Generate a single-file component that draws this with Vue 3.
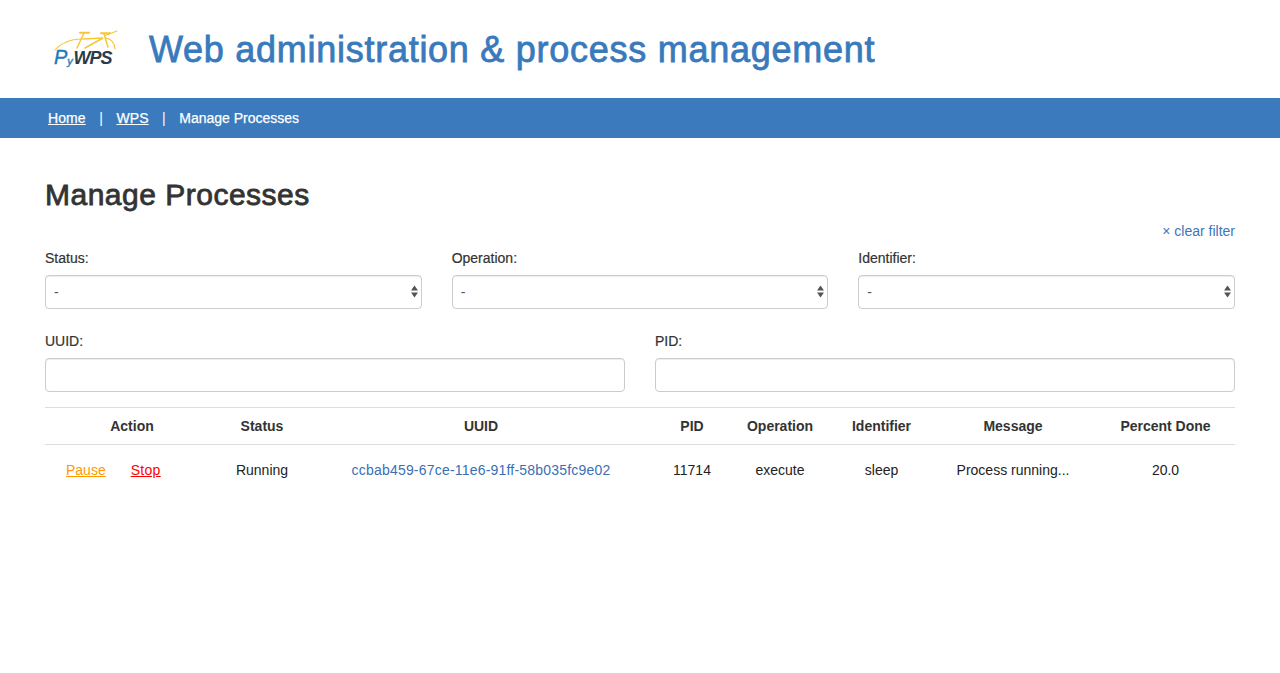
<script setup>
const topFilters = ['Status:', 'Operation:', 'Identifier:']
const bottomFilters = ['UUID:', 'PID:']
const columns = [
  { name: 'Action', width: 174 },
  { name: 'Status', width: 86 },
  { name: 'UUID', width: 352 },
  { name: 'PID', width: 70 },
  { name: 'Operation', width: 106 },
  { name: 'Identifier', width: 97 },
  { name: 'Message', width: 166 },
  { name: 'Percent Done', width: 139 },
]
</script>

<template>
  <div class="page">
    <header class="masthead">
      <svg class="logo" width="74" height="42" viewBox="0 0 74 42" role="img" aria-label="PyWPS">
        <g fill="none" stroke="#f8c537" stroke-linecap="round">
          <path d="M9 22C14 16 24 11 36 11" stroke-width="1.1" />
          <path d="M59 7.5C63 6 67 4.5 71 3" stroke-width="1.1" />
          <path d="M60 10C65 11 69 15 69 21" stroke-width="1.1" />
          <path d="M34 4.8H43" stroke-width="2" />
          <path d="M55 5.2H64" stroke-width="2" />
          <path d="M38 5L31 20" stroke-width="1.5" />
          <path d="M37 11L57 10L39 20" stroke-width="1.5" />
          <path d="M58 6L62 19" stroke-width="1.5" />
        </g>
        <text class="logo-py" x="8" y="36">P<tspan class="logo-y" dy="1">y</tspan></text>
        <text class="logo-wps" x="27.5" y="36">WPS</text>
      </svg>
      <h1 class="title">Web administration &amp; process management</h1>
    </header>

    <nav class="crumbs">
      <a href="#" class="crumb-link">Home</a>
      <span class="sep">|</span>
      <a href="#" class="crumb-link">WPS</a>
      <span class="sep">|</span>
      <span class="crumb-current">Manage Processes</span>
    </nav>

    <main class="content">
      <h2 class="heading">Manage Processes</h2>
      <div class="clear-row"><a href="#" class="clear-link">× clear filter</a></div>

      <div class="filters filters-top">
        <div v-for="f in topFilters" :key="f" class="field">
          <label class="label">{{ f }}</label>
          <div class="select-wrap">
            <select class="control select"><option>-</option></select>
            <svg class="arrows" width="7" height="13" viewBox="0 0 7 13">
              <path d="M3.5 0.5L7 5.5H0Z M0 7.5H7L3.5 12.5Z" fill="#555" />
            </svg>
          </div>
        </div>
      </div>

      <div class="filters filters-bottom">
        <div v-for="f in bottomFilters" :key="f" class="field">
          <label class="label">{{ f }}</label>
          <input class="control" type="text" />
        </div>
      </div>

      <table class="table">
        <colgroup>
          <col v-for="c in columns" :key="c.name" :style="{ width: c.width + 'px' }" />
        </colgroup>
        <thead>
          <tr><th v-for="c in columns" :key="c.name">{{ c.name }}</th></tr>
        </thead>
        <tbody>
          <tr>
            <td>
              <div class="actions">
                <a href="#" class="pause">Pause</a>
                <a href="#" class="stop">Stop</a>
              </div>
            </td>
            <td>Running</td>
            <td><a href="#" class="uuid">ccbab459-67ce-11e6-91ff-58b035fc9e02</a></td>
            <td>11714</td>
            <td>execute</td>
            <td>sleep</td>
            <td>Process running...</td>
            <td>20.0</td>
          </tr>
        </tbody>
      </table>
    </main>
  </div>
</template>

<style>
html, body { margin: 0; background: #fff; }
</style>

<style scoped>
.page {
  font-family: "Liberation Sans", Arial, sans-serif;
  font-size: 14px;
  line-height: 20px;
  color: #333;
  min-height: 673px;
}
.masthead {
  height: 98px;
  display: flex;
  align-items: center;
  padding-left: 46px;
  box-sizing: border-box;
}
.logo { margin-right: 29px; flex: none; }
.logo-py { font: italic 400 20px "Liberation Sans", sans-serif; fill: #1b7db8; stroke: #1b7db8; stroke-width: 0.4px; }
.logo-y { font-size: 11px; }
.logo-wps { font: italic 700 18px "Liberation Sans", sans-serif; fill: #2c3a4a; letter-spacing: -1px; }
.title {
  margin: 0;
  font-size: 36px;
  line-height: 40px;
  font-weight: 400;
  letter-spacing: 0.73px;
  color: #397abd;
  -webkit-text-stroke: 0.8px #397abd;
  position: relative;
  top: 1px;
}
.crumbs {
  height: 40px;
  background: #3a7abd;
  display: flex;
  align-items: center;
  padding-left: 48px;
  color: #fff;
}
.crumb-link { color: #fff; text-decoration: underline; letter-spacing: 0.1px; -webkit-text-stroke: 0.25px #fff; }
.sep { margin: 0 13.5px; }
.crumb-current { color: #fff; -webkit-text-stroke: 0.25px #fff; }
.content { padding: 0 45px; }
.heading {
  margin: 40px 0 0;
  font-size: 30px;
  line-height: 33px;
  font-weight: 400;
  letter-spacing: 0.5px;
  color: #333;
  -webkit-text-stroke: 0.8px #333;
}
.clear-row { margin-top: 10px; text-align: right; }
.clear-link { color: #3f75b8; text-decoration: none; }
.filters { display: grid; column-gap: 30px; }
.filters-top { grid-template-columns: repeat(3, 1fr); margin-top: 7px; }
.filters-bottom { grid-template-columns: repeat(2, 1fr); margin-top: 22px; }
.field { display: flex; flex-direction: column; min-width: 0; }
.label {
  margin-bottom: 7px;
  -webkit-text-stroke: 0.2px #333;
}
.control {
  display: block;
  width: 100%;
  height: 34px;
  box-sizing: border-box;
  border: 1px solid #ccc;
  border-radius: 4px;
  background: #fff;
  box-shadow: inset 0 1px 1px rgba(0, 0, 0, 0.075);
  padding: 0 8px;
  font: inherit;
  color: #555;
  outline: none;
}
.select { appearance: none; -webkit-appearance: none; }
.select-wrap { position: relative; }
.arrows { position: absolute; right: 4px; top: 10px; pointer-events: none; }
.table {
  width: 100%;
  margin-top: 15px;
  border-collapse: collapse;
  table-layout: fixed;
  border-top: 1px solid #ddd;
}
.table th {
  height: 36px;
  padding: 0;
  font-weight: 700;
  text-align: center;
  border-bottom: 1px solid #ddd;
}
.table td {
  height: 49px;
  padding: 0;
  text-align: center;
  white-space: nowrap;
  color: #222;
}
.actions { display: flex; gap: 25px; padding-left: 21px; }
.pause { color: #ff9900; }
.stop { color: #ff0000; letter-spacing: 0.3px; }
.uuid { color: #3a6fb5; text-decoration: none; letter-spacing: 0.2px; }
</style>
